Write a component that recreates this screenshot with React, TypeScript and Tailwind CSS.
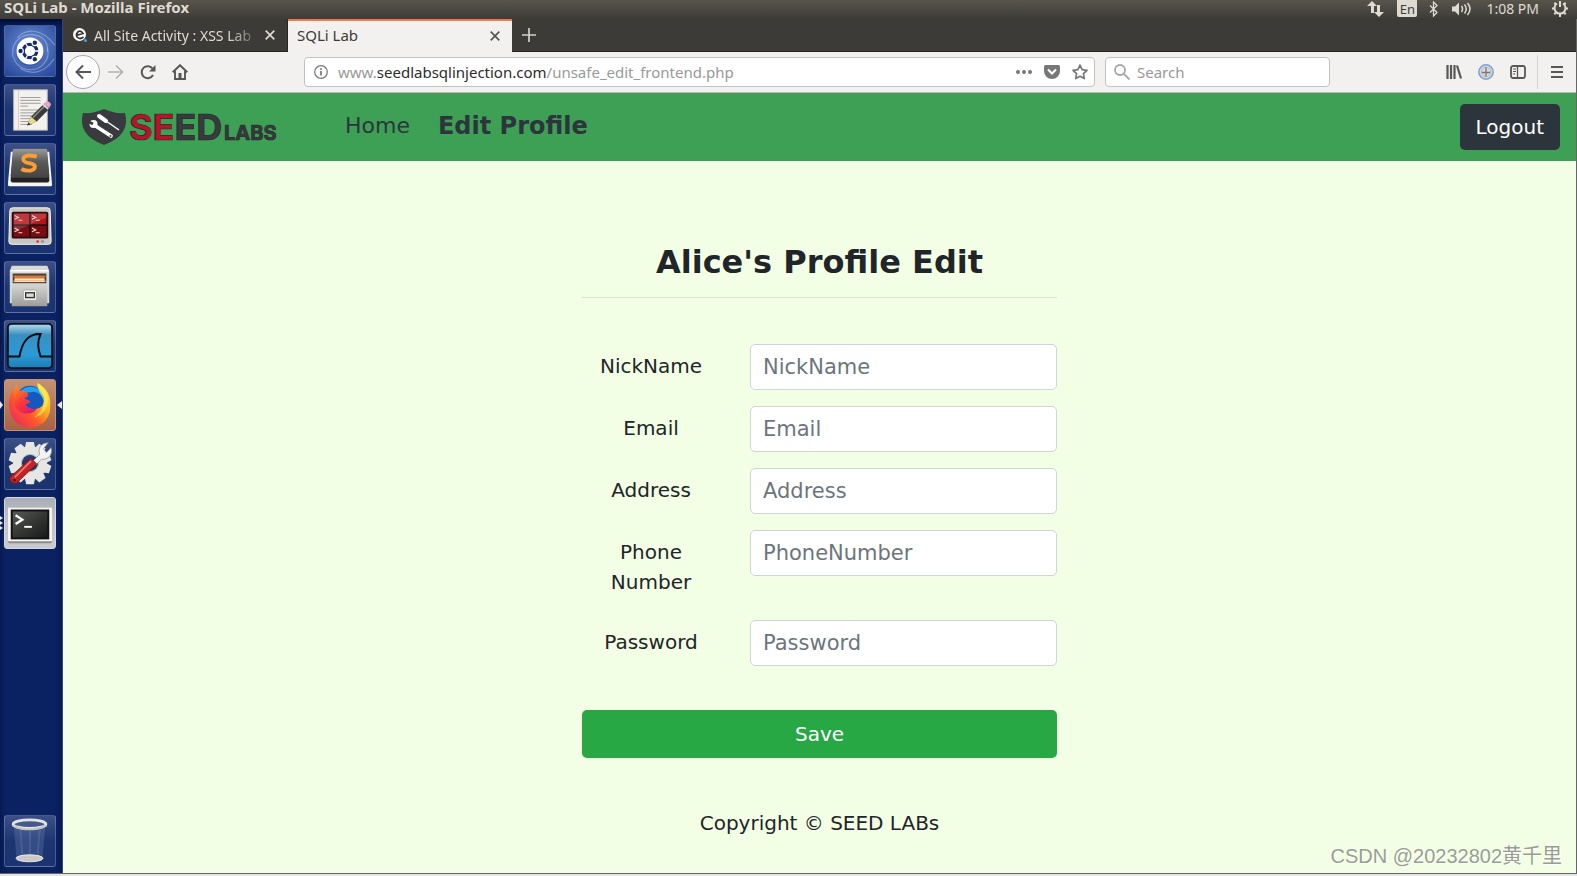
import React from "react";

const tile =
  "relative block size-[52px] shrink-0 rounded-[3px] border border-white/20 bg-linear-to-b from-[#3b4f88] via-[#1d3570] to-[#1b3370]";

function UbuntuIcon() {
  return (
    <svg viewBox="0 0 52 52" className="block size-full">
      <defs>
        <radialGradient id="ubBg" cx=".5" cy=".4" r=".7">
          <stop offset="0" stopColor="#6f8fd0" />
          <stop offset="1" stopColor="#2a4ca0" />
        </radialGradient>
      </defs>
      <rect width="52" height="52" rx="3" fill="url(#ubBg)" />
      <g fill="none" stroke="#a9bfe8" strokeOpacity=".55" strokeWidth="1.2">
        <path d="M8 32C6 14 20 6 34 10c8 3 11 9 10 17" />
        <path d="M44 22c4 14-8 26-22 23-8-2-12-7-13-13" />
        <path d="M13 12C22 2 38 2 52 20M16 44c12 8 26 4 35-10" />
      </g>
      <circle cx="26" cy="27" r="14.500" fill="#18357e" fillOpacity=".4" />
      <circle cx="26" cy="26" r="14" fill="#fff" />
      <circle cx="26" cy="26" r="7" fill="none" stroke="#162c6e" strokeWidth="3.4" />
      <g stroke="#fff" strokeWidth="1.4">
        <path d="M26 26L38 26M26 26L20 15.600M26 26L20 36.400" />
      </g>
      <circle cx="26" cy="26" r="5" fill="#fff" />
      <g fill="#162c6e" stroke="#fff" strokeWidth="1.200">
        <circle cx="16.200" cy="26" r="2.900" />
        <circle cx="31" cy="17.500" r="2.900" />
        <circle cx="31" cy="34.500" r="2.900" />
      </g>
    </svg>
  );
}

function EditorIcon() {
  return (
    <svg viewBox="0 0 52 52" className="block size-full">
      <rect x="9" y="5" width="35" height="42" fill="#f2f1ee" stroke="#b9b6ae" />
      <path d="M14 5v42" stroke="#eeb4b4" strokeWidth=".8" />
      <path
        d="M16 13h21M16 16h21M16 19h21M16 22h8M16 26h21M16 29h20M16 32h18M16 35h14M16 38h9M16 41h12"
        stroke="#9a9a98"
        strokeWidth="1"
      />
      <path d="M23 42l4-9 14-14 6 5-14 14z" fill="#3a3a3a" />
      <path d="M29 34l14-14" stroke="#8a8a8a" strokeWidth="1.500" />
      <path d="M23 42l4-9 6 5z" fill="#ead98a" />
      <path d="M23 42l1.500-3 2 2z" fill="#222" />
      <path d="M40 20l3-3q3-1 5 3l-2 4z" fill="#e6a3c4" />
      <path d="M39 20l6 5" stroke="#d8d8d8" strokeWidth="1.800" />
    </svg>
  );
}

function SublimeIcon() {
  return (
    <svg viewBox="0 0 52 52" className="block size-full">
      <defs>
        <linearGradient id="subl" x2="0" y2="1">
          <stop offset="0" stopColor="#9a9a9a" />
          <stop offset=".45" stopColor="#5a5a5a" />
          <stop offset="1" stopColor="#444" />
        </linearGradient>
      </defs>
      <path d="M6 8h4L6 38h40L42 8h4l3 35q0 1-2 1H5q-2 0-2-2z" fill="#f5f5f5" />
      <path d="M9 5h34l3 28v5q0 2-2 2H8q-2 0-2-2v-5z" fill="#222" />
      <path d="M9 5h34q1 0 1 2l2 26q0 2-2 2H8q-2 0-2-2L8 7q0-2 1-2z" fill="url(#subl)" />
      <path
        d="M33 13q-14-3-14 3c0 5 13 3 12 8 0 4-8 5-14 2"
        fill="none"
        stroke="#fb9d33"
        strokeWidth="4"
      />
    </svg>
  );
}

function TerminatorIcon() {
  return (
    <svg viewBox="0 0 52 52" className="block size-full">
      <path d="M8 5h36q3 0 3 3l1 32q0 3-3 3H7q-3 0-3-3L5 8q0-3 3-3z" fill="#c9c7c1" stroke="#f8f8f5" />
      <rect x="7" y="9" width="38" height="28" rx="2" fill="#2a0d0d" />
      <g fill="#b5141b">
        <path d="M9 11h16v11H9zM27 11h16v11H27z" />
      </g>
      <g fill="#7b0c12">
        <path d="M9 24h16v11H9zM27 24h16v11H27z" />
      </g>
      <path d="M9 11h34v4L9 30z" fill="#fff" fillOpacity=".15" />
      <path
        d="M10 13l4 2-4 2m4 1h4M28 13l4 2-4 2m4 1h4M10 26l4 2-4 2m4 1h4M28 26l4 2-4 2m4 1h4"
        fill="none"
        stroke="#f4dada"
        strokeWidth="1.100"
      />
      <circle cx="34" cy="40" r="1.300" fill="#e22" />
      <circle cx="39" cy="40" r="1.700" fill="#999" />
    </svg>
  );
}

function FilesIcon() {
  return (
    <svg viewBox="0 0 52 52" className="block size-full">
      <defs>
        <linearGradient id="cab" x2="0" y2="1">
          <stop offset="0" stopColor="#d8d8d6" />
          <stop offset="1" stopColor="#9d9d9b" />
        </linearGradient>
      </defs>
      <path d="M7 4h37l2 5v34H5V9z" fill="#d9d9d6" />
      <path d="M6 9h39" stroke="#fff" strokeWidth="1.500" />
      <rect x="8" y="12" width="35" height="11" fill="#4a4038" />
      <path d="M9 14h33v2H9z" fill="#d97731" />
      <path d="M10 16h31v5H10z" fill="#eb9950" />
      <path d="M10 18h31M9 20h33" stroke="#fbe9cf" strokeWidth="1.300" />
      <path d="M7 22h37v24H7z" fill="url(#cab)" />
      <rect x="19" y="29" width="14" height="11" rx="2" fill="#f1f1f0" stroke="#aaa" />
      <rect x="21.500" y="32" width="9" height="5" fill="#ddd" stroke="#333" strokeWidth="1.400" />
    </svg>
  );
}

function SharkIcon() {
  return (
    <svg viewBox="0 0 52 52" className="block size-full">
      <defs>
        <linearGradient id="shk" x2="0" y2="1">
          <stop offset="0" stopColor="#b9dcec" />
          <stop offset=".25" stopColor="#398fc0" />
          <stop offset=".7" stopColor="#2b9bd6" />
          <stop offset="1" stopColor="#1c7bb4" />
        </linearGradient>
      </defs>
      <rect x="3" y="3" width="46" height="46" rx="4" fill="url(#shk)" stroke="#0a1420" strokeWidth="2" />
      <path d="M4 37h11C18 20 25 13 37 13.500C34 20 34 29 37 37h11" fill="none" stroke="#05090d" strokeWidth="2" />
    </svg>
  );
}

function FirefoxIcon() {
  return (
    <svg viewBox="0 0 52 52" className="block size-full">
      <defs>
        <linearGradient id="ffTail" x1="1" y1="0" x2="0" y2="1">
          <stop offset="0" stopColor="#fff04a" />
          <stop offset=".35" stopColor="#ffb321" />
          <stop offset=".6" stopColor="#ff5a2a" />
          <stop offset="1" stopColor="#e8186c" />
        </linearGradient>
        <linearGradient id="ffBody" x1=".1" y1="0" x2=".7" y2="1">
          <stop offset="0" stopColor="#ff9320" />
          <stop offset=".5" stopColor="#ff3c35" />
          <stop offset="1" stopColor="#e3186e" />
        </linearGradient>
      </defs>
      <circle cx="26" cy="21" r="15" fill="#1657c0" />
      <path d="M15 12q8-7 17-4 7 2 8 11-7-9-14-6z" fill="#20a4ee" />
      <path
        d="M34 3c10 6 14 14 13 24A21 21 0 0 1 5 30C3 23 5 16 8 12c2-3 3-4 4-7 1 3 2 5 4 7 3-1 7 0 8 3 0 3-4 3-5 5 3 0 6 1 7 3-2 1-3 2-5 2 2 5 7 6 12 5 8-2 9-9 7-14-3-6-7-7-6-13z"
        fill="url(#ffTail)"
      />
      <path
        d="M12 5c1 3 2 5 4 7 3-1 7 0 8 3 0 3-4 3-5 5 3 0 6 1 7 3-2 1-3 2-5 2 2 5 7 6 12 5-3 5-10 6-15 4C10 31 6 21 12 5z"
        fill="url(#ffBody)"
      />
      <path d="M34 3c10 6 12 15 10 23-2 7-8 12-14 13 7-5 11-11 10-18-1-6-7-10-6-18z" fill="#fff15a" fillOpacity=".65" />
    </svg>
  );
}

function SettingsIcon() {
  const teeth = [0, 36, 72, 108, 144, 180, 216, 252, 288, 324];
  return (
    <svg viewBox="0 0 52 52" className="block size-full">
      <g fill="#e6e6e4">
        {teeth.map((a) => (
          <path key={a} d="M20.500 10l1.500-7h8l1.500 7z" transform={`rotate(${a} 26 25)`} />
        ))}
      </g>
      <circle cx="26" cy="25" r="13" fill="none" stroke="#e6e6e4" strokeWidth="9" />
      <circle cx="26" cy="25" r="9" fill="none" stroke="#b9b9b7" strokeWidth="1" />
      <path d="M29 23l7-7c-2-6 1-12 9-12l-5 6 3 4 5-5c2 7-3 13-10 12l-6 6z" fill="#f3f3f2" stroke="#8d8d8b" strokeWidth=".8" />
      <path d="M27 20l6 6-21 20q-4 1-6-2-2-3 0-5z" fill="#c22423" stroke="#7c1514" strokeWidth=".8" />
      <path d="M27 23L10 40" stroke="#ea7a76" strokeWidth="1.800" />
      <circle cx="10" cy="43" r="1.400" fill="#5c0d0d" />
    </svg>
  );
}

function TerminalIcon() {
  return (
    <svg viewBox="0 0 52 52" className="block size-full">
      <defs>
        <linearGradient id="term" x2="1" y2="1">
          <stop offset="0" stopColor="#5a5b59" />
          <stop offset=".5" stopColor="#353735" />
          <stop offset="1" stopColor="#181a19" />
        </linearGradient>
      </defs>
      <rect x="3" y="10" width="46" height="37" rx="2" fill="#8c8c8a" />
      <rect x="3" y="10" width="46" height="35" rx="1" fill="#f3f3f1" />
      <rect x="6" y="12" width="40" height="31" fill="#111" />
      <rect x="8" y="14" width="36" height="27" fill="url(#term)" />
      <path d="M11 18l7 4.500-7 4.500" fill="none" stroke="#fff" strokeWidth="2.400" />
      <path d="M20 30h8" stroke="#fff" strokeWidth="2" />
    </svg>
  );
}

function TrashIcon() {
  return (
    <svg viewBox="0 0 52 52" className="block size-full">
      <path d="M9 10l3 34q14 6 27 0l3-34z" fill="#8fa3cf" fillOpacity=".22" />
      <path d="M16 14l2 26M26 15v26M36 14l-2 26" stroke="#b8c5e2" strokeOpacity=".15" strokeWidth="2" />
      <ellipse cx="25.500" cy="44" rx="14" ry="3.600" fill="#c9c9c7" stroke="#ecece9" />
      <ellipse cx="25.500" cy="8.500" rx="17" ry="4.500" fill="#46598e" stroke="#e3e3df" strokeWidth="3" />
      <path d="M8 10q17 8 35 0" fill="none" stroke="#c4c4c0" strokeWidth="1.800" />
    </svg>
  );
}

function Launcher() {
  return (
    <nav
      aria-label="Launcher"
      className="flex w-[63px] shrink-0 flex-col items-center gap-[7px] border-r border-[#31457f] bg-[#0a2162] pt-[6px] pr-[2px] pb-[6px] shadow-[inset_0_5px_5px_#04103c]"
    >
      <button aria-label="Dash" className={tile}><UbuntuIcon /></button>
      <button aria-label="Text Editor" className={tile}><EditorIcon /></button>
      <button aria-label="Sublime Text" className={tile}><SublimeIcon /></button>
      <button aria-label="Terminator" className={tile}><TerminatorIcon /></button>
      <button aria-label="Files" className={tile}><FilesIcon /></button>
      <button aria-label="Wireshark" className={tile}><SharkIcon /></button>
      <button
        aria-label="Firefox"
        className="relative block size-[52px] shrink-0 rounded-[3px] border border-[#c39379] bg-linear-to-b from-[#c59273] to-[#a86243]"
      >
        <FirefoxIcon />
        <svg viewBox="0 0 4 8" className="absolute top-[21px] -left-[5px] h-2 w-1"><path d="M0 0l3 4-3 4z" fill="#e8e8e8" /></svg>
        <svg viewBox="0 0 5 8" className="absolute top-[21px] -right-[7px] h-2 w-[5px]"><path d="M5 0L0 4l5 4z" fill="#e8e8e8" /></svg>
      </button>
      <button aria-label="System Settings" className={tile}><SettingsIcon /></button>
      <button
        aria-label="Terminal"
        className="relative block size-[52px] shrink-0 rounded-[3px] border border-[#d4d7dc] bg-linear-to-b from-[#a9adb6] via-[#c2c4c8] to-[#c8cacd]"
      >
        <TerminalIcon />
        <svg viewBox="0 0 4 14" className="absolute top-[18px] -left-[5px] h-[14px] w-1">
          <path d="M0 0l3 2-3 2zM0 5l3 2-3 2zM0 10l3 2-3 2z" fill="#e8e8e8" />
        </svg>
      </button>
      <button aria-label="Trash" className={tile + " mt-auto"}><TrashIcon /></button>
    </nav>
  );
}

function SystemBar() {
  return (
    <header className="flex h-[19px] items-start justify-between bg-linear-to-b from-[#57544b] to-[#3d3c38] pr-2 pl-1 text-[#dfdbd2]">
      <h1 className="text-[15px] leading-[14px] font-bold">SQLi Lab - Mozilla Firefox</h1>
      <div className="flex items-center">
        <svg viewBox="0 0 18 16" className="mr-3 h-4 w-[18px]" fill="#dfdbd2">
          <path d="M5 0l5 5H7v7H4V5H0zM12 16l-5-5h3V4h3v7h4z" />
        </svg>
        <span className="mr-3 flex h-[17px] w-5 items-center justify-center rounded-b-[2px] bg-[#dfdbd2] text-[13px] leading-[14px] text-[#3d3c38]">
          En
        </span>
        <svg viewBox="0 0 9 16" className="mr-[14px] h-4 w-[9px]" fill="none" stroke="#dfdbd2" strokeWidth="1.300">
          <path d="M1 4.500l7 7L4.500 15V1L8 4.500l-7 7" />
        </svg>
        <svg viewBox="0 0 20 16" className="mr-[14px] h-4 w-5" fill="none" stroke="#dfdbd2" strokeWidth="1.500">
          <path d="M0 5.500h3l4-4v13l-4-4H0z" fill="#dfdbd2" stroke="none" />
          <path d="M9.500 5q2 3 0 6M12.500 3.500q3.500 4.500 0 9M15.500 2q5 6 0 12" />
        </svg>
        <time className="mr-3 text-[14px] leading-[14px]">1:08 PM</time>
        <svg viewBox="0 2 18 16" className="h-4 w-[18px]" fill="none" stroke="#dfdbd2">
          <path d="M6 4.500a5.500 5.500 0 1 0 6 0" strokeWidth="2" />
          <path d="M9 1v7" strokeWidth="2" />
          <path
            d="M1 9.500h2.500M14.500 9.500H17M9 15v3M3.300 3.800l1.700 1.700M14.700 3.800L13 5.500M3.300 15.200L5 13.500M14.700 15.200L13 13.500"
            strokeWidth="2"
          />
        </svg>
      </div>
    </header>
  );
}

function CloseIcon() {
  return (
    <svg viewBox="0 0 10 10" className="size-[10px]" fill="none" stroke="currentColor" strokeWidth="1.700">
      <path d="M.7.7l8.600 8.600M9.300.7L.7 9.300" />
    </svg>
  );
}

function TabStrip() {
  return (
    <div className="flex h-[33px] items-stretch border-b border-[#262522] bg-[#3c3b37] text-[15px]">
      <div className="flex w-[225px] items-center gap-[7px] border-r border-[#262522] pr-3 pl-[10px] text-[#dfdbd2]">
        <svg viewBox="0 0 14 14" className="size-[14px] shrink-0">
          <circle cx="6.500" cy="6.500" r="6.500" fill="#fff" />
          <path d="M3 7.500L10 5.500Q8 2 5 3.800 2.500 6 4 9q3 3 6.500 0" fill="none" stroke="#35342f" strokeWidth="1.700" />
          <circle cx="12.500" cy="12.500" r="1.500" fill="#3fa9e0" />
        </svg>
        <span className="-mr-1 flex-1 mask-r-from-80% text-[14px] whitespace-nowrap">All Site Activity : XSS Lab</span>
        <button aria-label="Close All Site Activity tab"><CloseIcon /></button>
      </div>
      <div className="-mb-px flex w-[224px] items-center justify-between border-t-2 border-[#f0774f] bg-[#f3f1f0] pr-3 pb-[2px] pl-[9px] text-[#3c3b37]">
        <span>SQLi Lab</span>
        <button aria-label="Close SQLi Lab tab" className="text-[#555]"><CloseIcon /></button>
      </div>
      <button aria-label="New tab" className="px-[10px] text-[#d5d2cb]">
        <svg viewBox="0 0 14 14" className="size-[14px]" stroke="currentColor" strokeWidth="1.700"><path d="M7 0v14M0 7h14" /></svg>
      </button>
    </div>
  );
}

function Toolbar() {
  return (
    <div className="flex h-[41px] items-center border-b border-[#b9b7b4] bg-[#f3f1f0] pr-[13px] pl-[3px] text-[#585756]">
      <button aria-label="Back" className="flex size-[34px] items-center justify-center rounded-full border border-[#a9a7a5] bg-[#fcfcfc]">
        <svg viewBox="0 0 16 16" className="size-4" fill="none" stroke="currentColor" strokeWidth="2"><path d="M16 8H1.500M8 1.500L1.500 8 8 14.500" /></svg>
      </button>
      <button aria-label="Forward" className="ml-2 text-[#b5b3b1]">
        <svg viewBox="0 0 16 16" className="size-4" fill="none" stroke="currentColor" strokeWidth="1.700"><path d="M0 8h14.500M8 1.500L14.500 8 8 14.500" /></svg>
      </button>
      <button aria-label="Reload" className="ml-4">
        <svg viewBox="0 0 16 16" className="size-4" fill="none" stroke="currentColor" strokeWidth="2">
          <path d="M13 11A6 6 0 1 1 12.500 4.500" />
          <path d="M15.500 1v6.500H9z" fill="currentColor" stroke="none" />
        </svg>
      </button>
      <button aria-label="Home page" className="ml-4">
        <svg viewBox="0 0 16 16" className="size-4" fill="none" stroke="currentColor" strokeWidth="1.900">
          <path d="M.7 8.300L8 1.200l7.300 7.100M3 7v8h10V7" />
          <path d="M6.500 15V9h3v6z" fill="currentColor" stroke="none" />
        </svg>
      </button>
      <div className="relative ml-[116px] flex h-[30px] min-w-0 flex-1 items-center rounded-[4px] border border-[#c4c2c0] bg-white pr-[6px] pl-[9px] text-[15px] text-[#999]">
        <svg viewBox="0 0 14 14" className="mr-[10px] size-[14px] shrink-0" fill="none" stroke="#777" strokeWidth="1.200">
          <circle cx="7" cy="7" r="6.300" />
          <path d="M7 6v4.500M7 3.300v1.600" strokeWidth="1.700" />
        </svg>
        <span className="flex-1 whitespace-nowrap">
          www.<span className="text-[#2c2c2c]">seedlabsqlinjection.com</span>/unsafe_edit_frontend.php
        </span>
        <input type="text" aria-label="Page address" className="absolute inset-y-0 right-24 left-8 bg-transparent outline-none" />
        <div className="flex items-center gap-3 text-[#777]">
          <button aria-label="Page actions">
            <svg viewBox="0 0 16 4" className="h-1 w-4" fill="currentColor"><circle cx="2" cy="2" r="2" /><circle cx="8" cy="2" r="2" /><circle cx="14" cy="2" r="2" /></svg>
          </button>
          <button aria-label="Save to Pocket">
            <svg viewBox="0 0 16 14" className="h-[14px] w-4"><path d="M1.500 0h13Q16 0 16 1.500V6a8 8 0 0 1-16 0V1.500Q0 0 1.500 0z" fill="currentColor" /><path d="M4 4.500l4 4 4-4" fill="none" stroke="#fff" strokeWidth="2" /></svg>
          </button>
          <button aria-label="Bookmark this page">
            <svg viewBox="0 0 16 16" className="size-4" fill="none" stroke="currentColor" strokeWidth="1.700" strokeLinejoin="round"><path d="M8 1.200l2.100 4.500 4.900.6-3.600 3.400.9 4.900L8 12.200l-4.300 2.400.9-4.900L1 6.300l4.900-.6z" /></svg>
          </button>
        </div>
      </div>
      <label className="ml-[10px] flex h-[30px] w-[225px] items-center gap-[7px] rounded-[4px] border border-[#c4c2c0] bg-white px-2">
        <svg viewBox="0 0 16 16" className="size-4 shrink-0" fill="none" stroke="#a5a5a5" strokeWidth="1.800"><circle cx="6" cy="6" r="5" /><path d="M9.500 9.500l6 6" /></svg>
        <input type="search" aria-label="Search" placeholder="Search" className="w-full min-w-0 bg-transparent text-[15px] outline-none placeholder:text-[#999]" />
      </label>
      <div className="ml-[116px] flex items-center">
        <button aria-label="Library">
          <svg viewBox="0 0 16 14" className="h-[14px] w-4" fill="none" stroke="currentColor" strokeWidth="2.200"><path d="M1.500 0v14M5 0v14M8.500 0v14M11 .5L15 13.500" /></svg>
        </button>
        <button aria-label="Live headers" className="ml-4">
          <svg viewBox="0 0 16 16" className="size-4"><circle cx="8" cy="8" r="7.200" fill="#d9dcdf" stroke="#7c9ed6" strokeWidth="1.500" /><path d="M8 3v10M4 8.500h8" stroke="#777" strokeWidth="1.300" /><circle cx="8" cy="8" r="4.800" fill="none" stroke="#aaa" strokeWidth=".8" /></svg>
        </button>
        <button aria-label="Sidebars" className="ml-4">
          <svg viewBox="0 0 16 14" className="h-[14px] w-4" fill="none" stroke="currentColor" strokeWidth="1.800"><rect x="1" y="1" width="14" height="12" rx="2" /><path d="M7.500 1v12" strokeWidth="1.300" /><path d="M3 4h3M3 6.500h3M3 9h2" strokeWidth="1.100" /></svg>
        </button>
        <span className="ml-[11px] h-[34px] w-px bg-[#d5d3d1]" />
        <button aria-label="Open menu" className="ml-[13px]">
          <svg viewBox="0 0 12 12" className="size-3" stroke="currentColor" strokeWidth="2"><path d="M0 1h12M0 6h12M0 11h12" /></svg>
        </button>
      </div>
    </div>
  );
}

function SeedLogo() {
  return (
    <a href="#" aria-label="SEED Labs" className="block">
      <svg viewBox="0 0 196 38" className="h-[38px] w-[196px] overflow-visible">
        <path d="M22 1Q33 6 43 5Q49 27 22 37Q-5 27 1 5Q11 6 22 1z" fill="#393a3e" />
        <path d="M12 17l17 11" stroke="#fff" strokeWidth="3.600" strokeLinecap="round" />
        <circle cx="11.500" cy="16" r="4" fill="#fff" />
        <path d="M6 13.500l5 2.500" stroke="#393a3e" strokeWidth="2.600" />
        <path d="M17 8l7 5" stroke="#fff" strokeWidth="4" strokeLinecap="round" />
        <path d="M24 13l13 9" stroke="#fff" strokeWidth="1.500" />
        <circle cx="28.500" cy="28" r="1" fill="#393a3e" />
        <g fontFamily="Inter, sans-serif" fontWeight="700" stroke="#26272a" strokeWidth=".7">
          <text x="47" y="32" fontSize="36">
            <tspan fill="#b8132b">SE</tspan>
            <tspan fill="#393a3e">ED</tspan>
          </text>
          <text x="142" y="32" fontSize="20" fill="#393a3e">LABS</text>
        </g>
      </svg>
    </a>
  );
}

const fields = [
  { id: "nickname", label: "NickName", placeholder: "NickName", type: "text" },
  { id: "email", label: "Email", placeholder: "Email", type: "text" },
  { id: "address", label: "Address", placeholder: "Address", type: "text" },
  { id: "phone", label: "Phone Number", placeholder: "PhoneNumber", type: "text" },
  { id: "password", label: "Password", placeholder: "Password", type: "password" },
];

function Page() {
  return (
    <div className="flex flex-1 flex-col bg-[#f3ffe4] font-['DejaVu_Sans',sans-serif] text-[20px] leading-[30px] text-[#212529]">
      <nav className="flex h-[68px] items-center bg-[#3ea055] pr-4 pl-[19px] text-[#2c353c]">
        <SeedLogo />
        <a href="#" className="ml-[67px] -mt-[2px] text-[22px]">Home</a>
        <a href="#" className="ml-7 -mt-[2px] text-[24px] font-bold">Edit Profile</a>
        <button className="ml-auto h-[46px] rounded-[5px] bg-[#2d353c] px-4 text-white">Logout</button>
      </nav>
      <main className="mx-auto flex w-[475px] max-w-full flex-1 flex-col pt-20 text-center">
        <h2 className="text-[32px] leading-[42px] font-bold">Alice's Profile Edit</h2>
        <form onSubmit={(e) => e.preventDefault()}>
          <hr className="mt-[14px] mb-[46px] border-[#dbe6ce]" />
          <div className="flex flex-col gap-4">
            {fields.map((f) => (
              <div key={f.id} className="flex items-start">
                <label htmlFor={f.id} className="w-[138px] px-4 py-[7px]">{f.label}</label>
                <input
                  id={f.id}
                  type={f.type}
                  placeholder={f.placeholder}
                  className="ml-[30px] h-[46px] min-w-0 flex-1 rounded-[5px] border border-[#ced4da] bg-white px-3 text-[21px] outline-none placeholder:text-[#6c757d]"
                />
              </div>
            ))}
          </div>
          <button type="submit" className="mt-11 h-12 w-full rounded-[5px] bg-[#28a745] text-white">Save</button>
        </form>
        <footer className="mt-[50px]">Copyright © SEED LABs</footer>
      </main>
    </div>
  );
}

export default function App() {
  return (
    <div className="relative flex min-h-screen flex-col border-b-2 border-[#e4e4e4] font-['Noto_Sans',sans-serif]">
      <SystemBar />
      <div className="flex flex-1 items-stretch border-r border-b border-[#666]">
        <Launcher />
        <div className="flex min-w-0 flex-1 flex-col">
          <TabStrip />
          <Toolbar />
          <Page />
        </div>
      </div>
      <p className="absolute right-[15px] bottom-[4px] font-['Liberation_Sans','Noto_Sans_CJK_SC',sans-serif] text-[20px] leading-7 text-[#989e92] [text-shadow:1px_1px_0_#fff]">
        CSDN @20232802黄千里
      </p>
    </div>
  );
}
